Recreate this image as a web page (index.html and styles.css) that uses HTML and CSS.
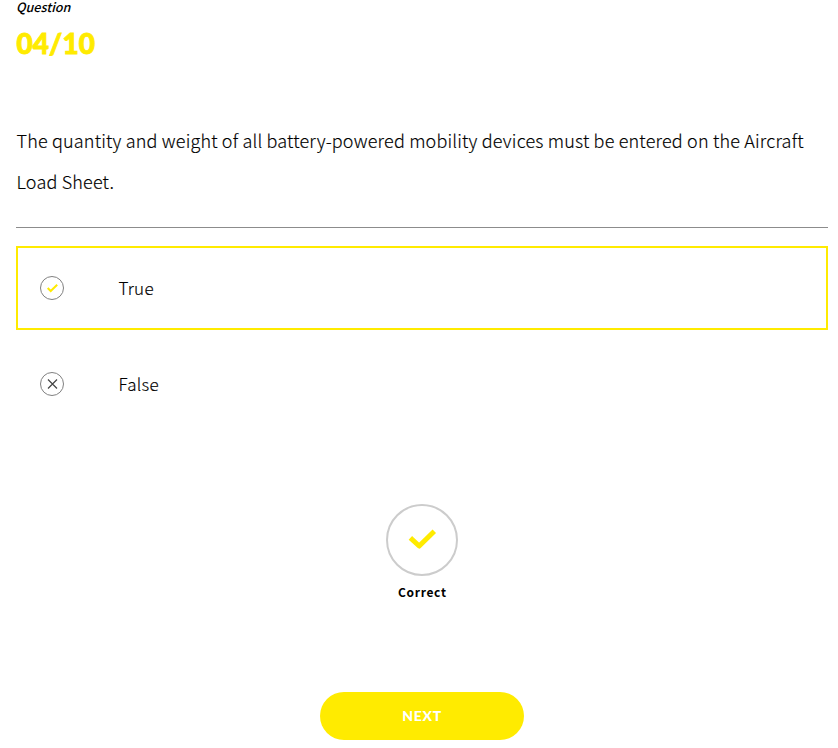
FILE: index.html
```html
<!DOCTYPE html>
<html lang="en">
<head>
<meta charset="utf-8">
<title>Quiz</title>
<link rel="stylesheet" href="styles.css">
</head>
<body>
<main class="quiz">
  <header class="progress">
    <div class="label">Question</div>
    <div class="count">04/10</div>
  </header>
  <h1 class="question">The quantity and weight of all battery-powered mobility devices must be entered on the Aircraft Load Sheet.</h1>
  <div class="answers">
    <div class="answer selected">
      <svg class="mark" viewBox="0 0 24 24"><circle cx="12" cy="12" r="11.5"/><path class="tick" d="M7.700 12l3 3 6.500-6.300"/></svg>
      <span>True</span>
    </div>
    <div class="answer">
      <svg class="mark" viewBox="0 0 24 24"><circle cx="12" cy="12" r="11.5"/><path class="cross" d="M8 7.500l9 9m0-9l-9 9"/></svg>
      <span>False</span>
    </div>
  </div>
  <section class="feedback">
    <svg class="result" viewBox="0 0 72 72"><circle cx="36" cy="36" r="35"/><path d="M26.200 35.500l7 6.500L46.500 29"/></svg>
    <div class="verdict">Correct</div>
  </section>
  <button class="next">NEXT</button>
</main>
</body>
</html>
```
FILE: styles.css
```css
* { box-sizing: border-box; }
body { margin: 0; background: #fff; color: #000; font-family: "Noto Sans CJK JP", "Noto Sans", sans-serif; }
svg { display: block; flex: none; }
.quiz { width: 812px; margin-left: 16px; display: flex; flex-direction: column; }
.label { height: 20px; font-size: 12.600px; line-height: 13px; font-style: italic; font-weight: 500; }
.count { margin-top: 7px; height: 35px; font-family: Lato, sans-serif; font-size: 28px; line-height: 32px; font-weight: 900; color: #ffeb00; -webkit-text-stroke: .9px #ffeb00; letter-spacing: .1px; padding-left: .4px; }
.question { margin: 58px 0 0; height: 108px; border-bottom: 1px solid #8c8c8c; font-size: 18px; line-height: 41px; font-weight: 300; letter-spacing: .18px; padding-left: .5px; -webkit-text-stroke: .15px #000; }
.answers { margin-top: 18px; display: flex; flex-direction: column; gap: 12px; }
.answer { height: 84px; border: 2px solid transparent; display: flex; align-items: center; gap: 54.500px; padding-left: 22px; font-size: 17px; font-weight: 300; letter-spacing: .25px; -webkit-text-stroke: .15px #000; }
.answer span { line-height: 24px; }
.selected { border-color: #ffeb00; }
.mark { width: 24px; height: 24px; fill: none; stroke: #808080; }
.mark .tick { stroke: #ffeb00; stroke-width: 2; }
.mark .cross { stroke: #444; stroke-width: 1.2; }
.feedback { margin-top: 78px; display: flex; flex-direction: column; align-items: center; }
.result { width: 72px; height: 72px; fill: none; stroke: #ccc; stroke-width: 2; }
.result path { stroke: #ffeb00; stroke-width: 5; stroke-linecap: square; stroke-linejoin: round; }
.verdict { margin-top: 6px; font-size: 12px; line-height: 20px; font-weight: 700; letter-spacing: .7px; padding-left: .7px; }
.next { margin: 90px auto 0; width: 204px; height: 48px; border: 0; border-radius: 24px; background: #ffeb00; color: #fff; font: 900 14px/20px Lato, sans-serif; letter-spacing: .7px; padding: 0 0 1px; }
```
